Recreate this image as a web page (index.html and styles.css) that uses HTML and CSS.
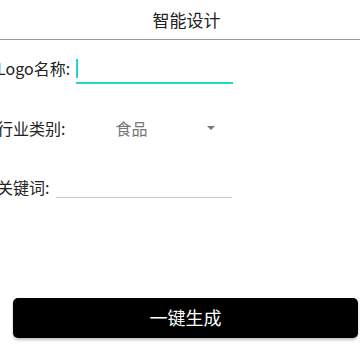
FILE: index.html
```html
<!DOCTYPE html>
<html lang="zh">
<head>
<meta charset="utf-8">
<link rel="stylesheet" href="styles.css">
</head>
<body>
<div class="app">
  <header class="bar"><h1 class="title">智能设计</h1></header>
  <main class="form">
    <div class="row row-name">
      <span class="label">Logo名称:</span>
      <div class="field field-active"><span class="cursor"></span></div>
    </div>
    <div class="row row-cat">
      <span class="label">行业类别:</span>
      <div class="select"><span class="value">食品</span><span class="arrow"></span></div>
    </div>
    <div class="row row-kw">
      <span class="label">关键词:</span>
      <div class="field field-plain"></div>
    </div>
  </main>
  <div class="actions"><button class="btn">一键生成</button></div>
</div>
</body>
</html>
```
FILE: styles.css
```css
* { box-sizing: border-box; }
html, body { margin: 0; padding: 0; background: #fff; }
body {
  width: 360px; height: 360px; overflow: hidden;
  font-family: "Noto Sans CJK SC", "Noto Sans", Roboto, sans-serif;
  color: #222;
}
.app { display: flex; flex-direction: column; height: 360px; }
.bar {
  height: 40px; border-bottom: 1px solid #9a9a9a;
  display: flex; align-items: center; justify-content: center;
  padding-left: 13px;
}
.title { margin: 0; font-size: 17px; font-weight: 400; line-height: 20px; color: #222; }
.form { flex: 1; display: flex; flex-direction: column; margin-left: -3px; }
.row { display: flex; align-items: center; font-size: 16px; }
.label { line-height: 20px; white-space: nowrap; }
.row-name { margin-top: 16px; height: 24px; }
.field-active {
  margin-left: 6px; width: 157px; height: 24px; margin-top: 7px;
  border-bottom: 2px solid #1fd8cc; position: relative;
}
.cursor { position: absolute; left: 0; top: -1px; width: 2px; height: 19px; background: #1fd8cc; }
.row-cat { margin-top: 36px; height: 24px; }
.select { display: flex; align-items: center; margin-left: 50px; width: 119px; }
.value { color: #777; line-height: 20px; }
.arrow {
  margin-left: auto; margin-right: 19px; width: 0; height: 0;
  border-left: 4px solid transparent; border-right: 4px solid transparent;
  border-top: 4px solid #777;
}
.row-kw { margin-top: 35px; height: 24px; }
.field-plain { margin-left: 7px; width: 176px; height: 22px; border-bottom: 1px solid #c8c8c8; margin-top: 0; }
.actions { padding: 0 2px 22px 13px; }
.btn {
  width: 345px; height: 40px; border: none; border-radius: 5px;
  background: #000; color: #fff; font-family: inherit; font-size: 18px;
  box-shadow: 0 2px 3px rgba(0,0,0,0.25); padding: 0 0 2px 0;
}
```
